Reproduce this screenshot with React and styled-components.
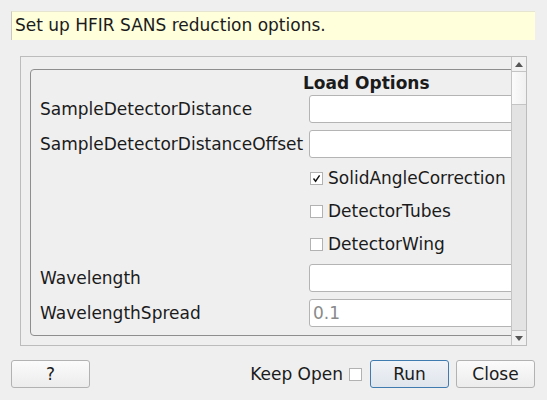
import * as React from 'react'
import styled, { createGlobalStyle } from 'styled-components'

const Global = createGlobalStyle`
  html, body {
    margin: 0;
    background: #efefef;
  }
  body {
    font-family: "DejaVu Sans", "Liberation Sans", sans-serif;
    font-size: 17px;
    color: #1b1b1b;
  }
`

const Dialog = styled.div`
  width: 547px;
  height: 400px;
  box-sizing: border-box;
  padding: 11px 12px 0 11px;
  display: flex;
  flex-direction: column;
`

const Description = styled.div`
  height: 29px;
  box-sizing: border-box;
  background: #ffffdc;
  border-left: 1px solid #c9c9c0;
  border-top: 1px solid #e6e6d0;
  padding-left: 3px;
  line-height: 26px;
  white-space: nowrap;
`

const ScrollFrame = styled.div`
  margin: 16px 8px 0 9px;
  height: 290px;
  flex-shrink: 0;
  box-sizing: border-box;
  border: 1px solid #bcbcbc;
  display: flex;
`

const Viewport = styled.div`
  flex: 1;
  overflow: hidden;
  padding: 12px 0 0 9px;
`

const GroupBox = styled.div`
  width: 520px;
  height: 267px;
  box-sizing: border-box;
  border: 1px solid #8e8e8e;
  border-radius: 4px;
  padding: 0 0 0 9px;
`

const GroupTitle = styled.div`
  height: 25px;
  line-height: 26px;
  font-weight: bold;
  padding-left: 263px;
  white-space: nowrap;
`

const Form = styled.div`
  display: grid;
  grid-template-columns: 263px 1fr;
  column-gap: 6px;
  row-gap: 7px;
`

const Label = styled.div`
  display: flex;
  align-items: center;
  white-space: nowrap;
`

const Input = styled.div`
  grid-column: 2;
  height: 28px;
  box-sizing: border-box;
  background: #fff;
  border: 1px solid #b4b4b4;
  border-radius: 3px;
  padding-left: 3px;
  line-height: 26px;
  color: #8a8a8a;
`

const CheckRow = styled.label`
  grid-column: 2;
  height: 26px;
  display: flex;
  align-items: center;
  gap: 5px;
  padding-left: 1px;
  white-space: nowrap;
`

const Box = styled.span`
  width: 13px;
  height: 13px;
  box-sizing: border-box;
  border: 1px solid #b2b2b2;
  background: #fff;
  display: inline-flex;
  align-items: center;
  justify-content: center;
  flex-shrink: 0;
`

const ScrollBar = styled.div`
  width: 14px;
  border-left: 1px solid #c4c4c4;
  display: flex;
  flex-direction: column;
  background: #e3e3e3;
`

const Arrow = styled.div`
  height: 14px;
  background: #f1f1f1;
  display: flex;
  align-items: center;
  justify-content: center;
  border-${p => (p.$down ? 'top' : 'bottom')}: 1px solid #c4c4c4;
`

const Handle = styled.div`
  height: 33px;
  box-sizing: border-box;
  background: linear-gradient(to right, #fbfbfb, #f0f0f0);
  border-bottom: 1px solid #c4c4c4;
`

const Track = styled.div`
  flex: 1;
`

const Footer = styled.div`
  margin-top: 14px;
  display: flex;
  align-items: center;
`

const Button = styled.button`
  width: 79px;
  height: 28px;
  flex-shrink: 0;
  box-sizing: border-box;
  font: inherit;
  color: #1b1b1b;
  border-radius: 3px;
  border: 1px solid ${p => (p.$default ? '#3f7bae' : '#b2b2b2')};
  background: ${p =>
    p.$default
      ? 'linear-gradient(#f0f3f7, #dfe5ec)'
      : 'linear-gradient(#fbfbfb, #ececec)'};
  margin-left: ${p => p.$gap || 0}px;
  padding: 0;
`

const Spacer = styled.div`
  flex: 1;
`

const KeepOpen = styled.label`
  display: flex;
  align-items: center;
  gap: 6px;
  margin-right: 8px;
  white-space: nowrap;
`

const Check = () => (
  <svg width="9" height="9" viewBox="0 0 9 9">
    <path d="M1.5 4.5 L3.6 7.2 L7.6 1.4" fill="none" stroke="#111" strokeWidth="1.4" />
  </svg>
)

const Tri = ({ down }) => (
  <svg width="8" height="5" viewBox="0 0 8 5">
    <path d={down ? 'M0 0 H8 L4 5 Z' : 'M0 5 H8 L4 0 Z'} fill="#555" />
  </svg>
)

const App = () => {
  return (
    <Dialog>
      <Global />
      <Description>Set up HFIR SANS reduction options.</Description>
      <ScrollFrame>
        <Viewport>
          <GroupBox>
            <GroupTitle>Load Options</GroupTitle>
            <Form>
              <Label>SampleDetectorDistance</Label>
              <Input />
              <Label>SampleDetectorDistanceOffset</Label>
              <Input />
              <CheckRow>
                <Box><Check /></Box>SolidAngleCorrection
              </CheckRow>
              <CheckRow>
                <Box />DetectorTubes
              </CheckRow>
              <CheckRow>
                <Box />DetectorWing
              </CheckRow>
              <Label>Wavelength</Label>
              <Input />
              <Label>WavelengthSpread</Label>
              <Input>0.1</Input>
            </Form>
          </GroupBox>
        </Viewport>
        <ScrollBar>
          <Arrow><Tri /></Arrow>
          <Handle />
          <Track />
          <Arrow $down><Tri down /></Arrow>
        </ScrollBar>
      </ScrollFrame>
      <Footer>
        <Button>?</Button>
        <Spacer />
        <KeepOpen>
          Keep Open <Box />
        </KeepOpen>
        <Button $default>Run</Button>
        <Button $gap={7}>Close</Button>
      </Footer>
    </Dialog>
  )
}

export default App
